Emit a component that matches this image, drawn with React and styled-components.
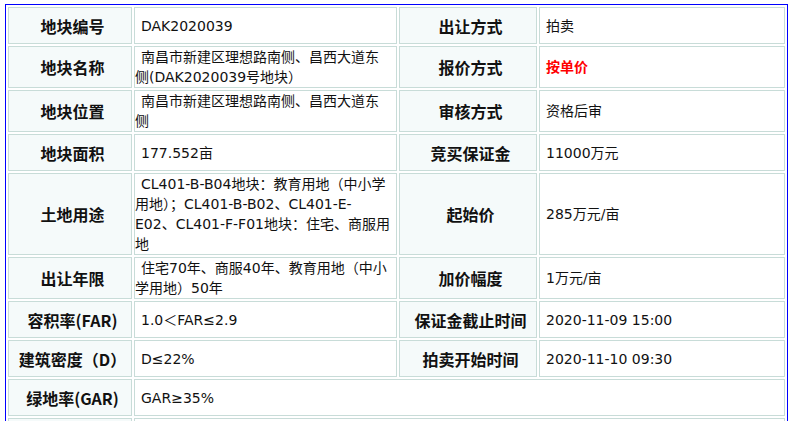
import React from "react";
import styled, { createGlobalStyle } from "styled-components";

const GlobalStyle = createGlobalStyle`
  html, body {
    margin: 0;
    padding: 0;
    background: #fff;
  }
`;

const Page = styled.div`
  padding: 4px 0 0 5px;
`;

const Sheet = styled.table`
  box-sizing: border-box;
  width: 783px;
  table-layout: fixed;
  border: 1px solid #0000ff;
  border-collapse: separate;
  border-spacing: 2px;
  color: #111;
`;

const Col = styled.col`
  width: ${(p) => p.$w}px;
`;

const LabelCell = styled.th`
  height: 35px;
  padding: 0 0 0 5px;
  border: 1px solid #c8dcd8;
  background: #f5fafa;
  text-align: center;
  vertical-align: middle;
  font-family: "Noto Sans CJK SC", sans-serif;
  font-size: 16px;
  font-weight: 700;
  line-height: 20px;
  white-space: nowrap;
`;

const ValueCell = styled.td`
  height: 35px;
  padding: 0;
  border: 1px solid #c8dcd8;
  background: #fff;
  text-align: left;
  vertical-align: middle;
  text-indent: 6px;
  font-family: "DejaVu Sans", "Noto Sans CJK SC", sans-serif;
  font-size: 14px;
  line-height: 20px;
  color: ${(p) => (p.$accent ? "#ff0000" : "#111")};
  font-weight: ${(p) => (p.$accent ? 700 : 400)};
`;

const columns = [124, 263, 138, 246];

const rows = [
  [
    { label: "地块编号", value: ["DAK2020039"] },
    { label: "出让方式", value: ["拍卖"] },
  ],
  [
    { label: "地块名称", value: ["南昌市新建区理想路南侧、昌西大道东", "侧(DAK2020039号地块）"] },
    { label: "报价方式", value: ["按单价"], accent: true },
  ],
  [
    { label: "地块位置", value: ["南昌市新建区理想路南侧、昌西大道东", "侧"] },
    { label: "审核方式", value: ["资格后审"] },
  ],
  [
    { label: "地块面积", value: ["177.552亩"] },
    { label: "竞买保证金", value: ["11000万元"] },
  ],
  [
    {
      label: "土地用途",
      value: [
        "CL401-B-B04地块：教育用地（中小学",
        "用地）；CL401-B-B02、CL401-E-",
        "E02、CL401-F-F01地块：住宅、商服用",
        "地",
      ],
    },
    { label: "起始价", value: ["285万元/亩"] },
  ],
  [
    { label: "出让年限", value: ["住宅70年、商服40年、教育用地（中小", "学用地）50年"] },
    { label: "加价幅度", value: ["1万元/亩"] },
  ],
  [
    { label: "容积率(FAR)", value: ["1.0＜FAR≤2.9"] },
    { label: "保证金截止时间", value: ["2020-11-09 15:00"] },
  ],
  [
    { label: "建筑密度（D）", value: ["D≤22%"] },
    { label: "拍卖开始时间", value: ["2020-11-10 09:30"] },
  ],
  [{ label: "绿地率(GAR)", value: ["GAR≥35%"], span: 3 }],
  // next row only peeks in at the bottom edge
  [{ label: "", value: [], span: 3 }],
];

function Lines({ lines }) {
  return lines.map((line, i) => (
    <React.Fragment key={i}>
      {i > 0 && <br />}
      {line}
    </React.Fragment>
  ));
}

export default function App() {
  return (
    <>
      <GlobalStyle />
      <Page>
        <Sheet>
          <colgroup>
            {columns.map((w, i) => (
              <Col key={i} $w={w} />
            ))}
          </colgroup>
          <tbody>
            {rows.map((row, r) => (
              <tr key={r}>
                {row.map((item, c) => (
                  <React.Fragment key={c}>
                    <LabelCell scope="row">{item.label}</LabelCell>
                    <ValueCell colSpan={item.span || 1} $accent={item.accent}>
                      <Lines lines={item.value} />
                    </ValueCell>
                  </React.Fragment>
                ))}
              </tr>
            ))}
          </tbody>
        </Sheet>
      </Page>
    </>
  );
}
